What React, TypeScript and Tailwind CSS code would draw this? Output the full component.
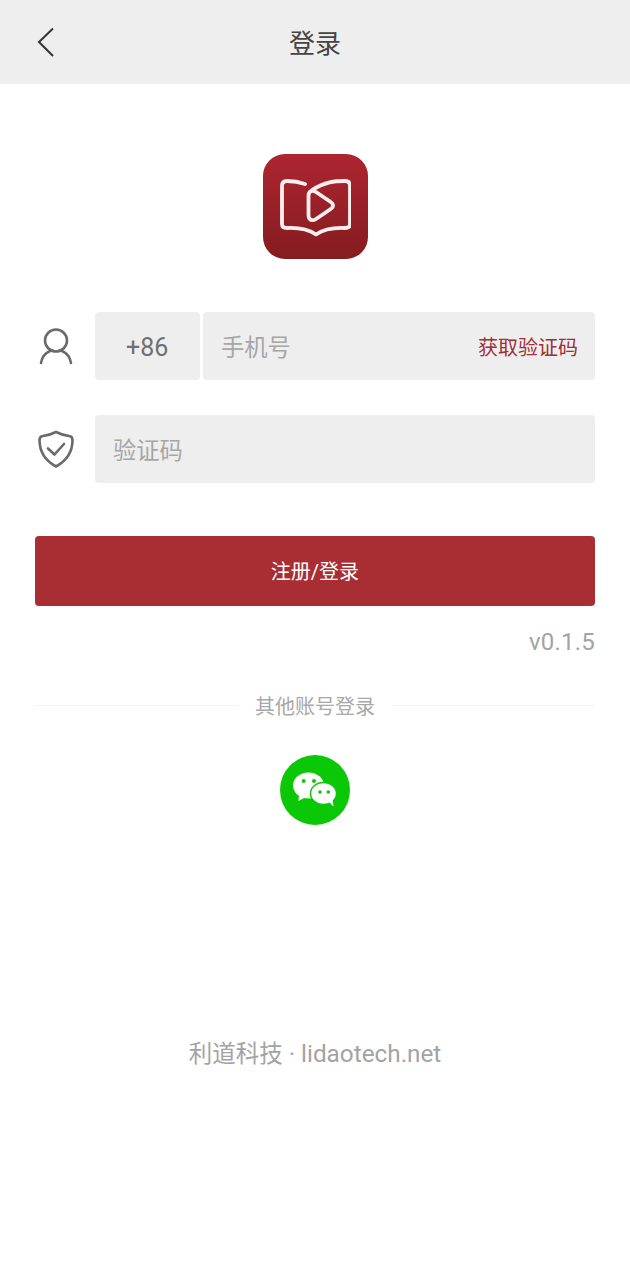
const font = { fontFamily: 'Roboto, "Noto Sans CJK SC", sans-serif' };

function Back() {
  return (
    <svg width="20" height="32" viewBox="0 0 20 32" fill="none" stroke="#333" strokeWidth="2">
      <path d="M17 1.500 L3 15 L17 29" />
    </svg>
  );
}

function Logo() {
  return (
    <div className="w-[105px] h-[105px] rounded-[22px] bg-gradient-to-b from-[#ad2530] to-[#851c20] flex items-center justify-center">
      <svg width="72" height="60" viewBox="0 0 72 60" fill="none" stroke="#fbeeee" strokeWidth="3.800" strokeLinejoin="round" strokeLinecap="round">
        <path d="M26 7 C19 4.500 13 4 8 4 C4.500 4 3 5.500 3 9 V47 C3 50 4.500 51 8 51 C19 50.500 29 52 37 57.500 C45 52 55 50.500 66 51 C69.500 51 71 50 71 47 V9 C71 5.500 69.500 4 66 4 C56 4 46 4.500 33 13" />
        <path d="M29.500 19 C29.500 14 33 12.500 37 15 L51 24.500 C55 27 55 30 51 32.500 L37 42 C33 44.500 29.500 43 29.500 38 Z" />
      </svg>
    </div>
  );
}

function User() {
  return (
    <svg width="34" height="38" viewBox="0 0 34 38" fill="none" stroke="#6a6a6a" strokeWidth="2.600" strokeLinecap="round">
      <circle cx="17" cy="13.500" r="11" />
      <path d="M2 36 C3 29.500 6.500 26 11 24 M32 36 C31 29.500 27.500 26 23 24" />
    </svg>
  );
}

function Shield() {
  return (
    <svg width="36" height="38" viewBox="0 0 36 38" fill="none" stroke="#6a6a6a" strokeWidth="2.600" strokeLinejoin="round" strokeLinecap="round">
      <path d="M18 2 C22 4 27 5.500 31 6 C33.500 6.300 34.500 7.500 34.500 10 C34.500 22 28 31 18 36.500 C8 31 1.500 22 1.500 10 C1.500 7.500 2.500 6.300 5 6 C9 5.500 14 4 18 2 Z" />
      <path d="M10 18.500 L16.500 24.500 L26 14" />
    </svg>
  );
}

function WeChat() {
  return (
    <div className="w-[70px] h-[70px] rounded-full bg-[#0ac805] flex items-center justify-center">
      <svg width="44" height="36" viewBox="0 0 44 36">
        <ellipse cx="15.500" cy="13.500" rx="15.500" ry="13" fill="#fff" />
        <path d="M6 22 L5.500 29 L13 25 Z" fill="#fff" />
        <circle cx="10.700" cy="9" r="2" fill="#0ac805" />
        <circle cx="21" cy="9" r="2" fill="#0ac805" />
        <ellipse cx="30.500" cy="21.500" rx="13" ry="11" fill="#fff" stroke="#0ac805" strokeWidth="1.500" />
        <path d="M36 30 L40.500 34.500 L39.500 27 Z" fill="#fff" />
        <circle cx="27" cy="20" r="1.800" fill="#0ac805" />
        <circle cx="35.300" cy="20" r="1.800" fill="#0ac805" />
      </svg>
    </div>
  );
}

export default function App() {
  return (
    <div className="w-[630px] h-[1280px] bg-white flex flex-col" style={font}>
      <header className="h-[84px] pt-[4px] bg-[#eeeeee] relative flex items-center justify-center">
        <div className="absolute left-[36px] top-[27px]"><Back /></div>
        <span className="text-[26px] text-[#444444]">登录</span>
      </header>
      <div className="flex justify-center mt-[70px]"><Logo /></div>

      <div className="mt-[53px] px-[35px] flex items-center">
        <div className="w-[60px] pl-[4px]"><User /></div>
        <div className="w-[104.500px] h-[68px] pt-[4px] rounded bg-[#eeeeee] flex items-center justify-center text-[25px] text-[#707070]">+86</div>
        <div className="ml-[3.500px] flex-1 h-[68px] pt-[4px] rounded bg-[#eeeeee] flex items-center justify-between pl-[18px] pr-[17px]">
          <span className="text-[23.300px] text-[#a6a6a6]">手机号</span>
          <span className="text-[20px] text-[#a02e33]">获取验证码</span>
        </div>
      </div>

      <div className="mt-[35px] px-[35px] flex items-center">
        <div className="w-[60px] pl-[3px]"><Shield /></div>
        <div className="flex-1 h-[68px] pt-[4px] rounded bg-[#eeeeee] flex items-center px-[18px]">
          <span className="text-[23.300px] text-[#a6a6a6]">验证码</span>
        </div>
      </div>

      <div className="mt-[53px] mx-[35px] h-[70px] pt-[2px] rounded bg-[#a82e33] flex items-center justify-center text-[20px] text-white">注册/登录</div>

      <div className="mt-[20px] mx-[35px] text-right text-[24px] leading-[32px] tracking-[0.2px] text-[#a3a3a3]">v0.1.5</div>

      <div className="mt-[30px] mx-[35px] flex items-center gap-[17px]">
        <div className="flex-1 h-px bg-[#f2f2f2]" />
        <span className="pt-[4px] text-[20px] leading-[30px] text-[#a8a8a8]">其他账号登录</span>
        <div className="flex-1 h-px bg-[#f2f2f2]" />
      </div>

      <div className="mt-[33px] flex justify-center"><WeChat /></div>

      <div className="mt-[211px] text-center leading-[36px] text-[#a3a3a3]">
        <span className="text-[23.500px]">利道科技</span>
        <span className="text-[24.300px]"> · lidaotech.net</span>
      </div>
    </div>
  );
}
